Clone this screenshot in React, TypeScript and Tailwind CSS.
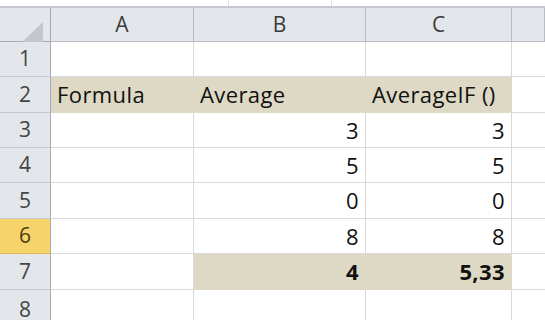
import React from "react";

const font = { fontFamily: '"Open Sans", "Liberation Sans", sans-serif' };

const heights = [35, 36, 35, 35, 36, 35, 36, 40];

type Cell = { text?: string; align?: "left" | "right"; tan?: boolean; bold?: boolean };

const data: Cell[][] = [
  [{}, {}, {}],
  [
    { text: "Formula", tan: true },
    { text: "Average", tan: true },
    { text: "AverageIF ()", tan: true },
  ],
  [{}, { text: "3", align: "right" }, { text: "3", align: "right" }],
  [{}, { text: "5", align: "right" }, { text: "5", align: "right" }],
  [{}, { text: "0", align: "right" }, { text: "0", align: "right" }],
  [{}, { text: "8", align: "right" }, { text: "8", align: "right" }],
  [{}, { text: "4", align: "right", tan: true, bold: true }, { text: "5,33", align: "right", tan: true, bold: true }],
  [{}, {}, {}],
];

export default function App() {
  return (
    <div className="w-[545px] h-[320px] overflow-hidden bg-white text-[#111]" style={font}>
      <div className="h-[8px] bg-white border-b-2 border-[#c4c8ce] flex">
        <div className="ml-[228px] w-[104px] h-full border-x border-[#e0e3e7]" />
      </div>
      <div className="grid grid-cols-[51px_143px_172px_146px_1fr]">
        <div className="h-[34px] bg-[#e3e7ec] border-r border-b border-[#a7abb0] relative">
          <svg className="absolute left-[22px] top-[14px]" width="21" height="20" viewBox="0 0 21 20">
            <polygon points="0,20 21,20 21,0" fill="#c3c6cb" />
          </svg>
        </div>
        {["A", "B", "C", ""].map((l, i) => (
          <div
            key={i}
            className="h-[34px] bg-[#e3e7ec] border-r border-b border-[#b8bdc4] flex items-center justify-center text-[21px] text-[#3a3a3a]"
          >
            {l}
          </div>
        ))}
        {data.map((row, r) => (
          <React.Fragment key={r}>
            <div
              className={
                "border-r flex items-center justify-center text-[21px] " +
                (r === 5
                  ? "bg-[#f7d46a] border-b border-[#e3b85a] border-r-[#a7abb0] text-[#4a3c10]"
                  : "bg-[#e3e7ec] border-b border-[#c6cbd1] border-r-[#a7abb0] text-[#444]")
              }
              style={{ height: heights[r] }}
            >
              {r + 1}
            </div>
            {row.map((c, ci) => (
              <div
                key={ci}
                className={
                  "flex items-center px-[6px] text-[22px] tracking-[0.4px] whitespace-nowrap border-r border-b " +
                  (c.tan ? "bg-[#ddd9c4] border-[#ddd9c4] " : "border-[#d9d9d9] ") +
                  (c.align === "right" ? "justify-end " : "justify-start ") +
                  (c.bold ? "font-bold" : "")
                }
                style={{ height: heights[r] }}
              >
                {c.text}
              </div>
            ))}
            <div className="border-b border-[#d9d9d9]" style={{ height: heights[r] }} />
          </React.Fragment>
        ))}
      </div>
    </div>
  );
}
